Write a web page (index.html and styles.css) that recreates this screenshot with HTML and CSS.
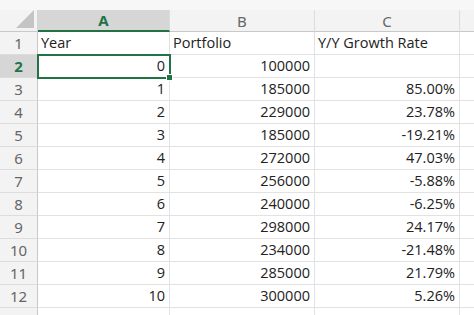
FILE: index.html
```html
<!DOCTYPE html>
<html lang="en">
<head>
    <meta charset="UTF-8">
    <title>Growth Rate Sheet</title>
    <link rel="stylesheet" href="styles.css">
</head>
<body>
    <div class="strip"></div>
    <div class="sheet">
        <div class="corner"><span class="tri"></span></div>
        <div class="colhead active">A</div>
        <div class="colhead">B</div>
        <div class="colhead">C</div>
        <div class="colhead last"></div>

        <div class="rowhead">1</div>
        <div class="cell">Year</div>
        <div class="cell">Portfolio</div>
        <div class="cell">Y/Y Growth Rate</div>
        <div class="cell"></div>

        <div class="rowhead active">2</div>
        <div class="cell num selected">0<span class="handle"></span></div>
        <div class="cell num">100000</div>
        <div class="cell num"></div>
        <div class="cell"></div>

        <div class="rowhead">3</div>
        <div class="cell num">1</div>
        <div class="cell num">185000</div>
        <div class="cell num">85.00%</div>
        <div class="cell"></div>

        <div class="rowhead">4</div>
        <div class="cell num">2</div>
        <div class="cell num">229000</div>
        <div class="cell num">23.78%</div>
        <div class="cell"></div>

        <div class="rowhead">5</div>
        <div class="cell num">3</div>
        <div class="cell num">185000</div>
        <div class="cell num">-19.21%</div>
        <div class="cell"></div>

        <div class="rowhead">6</div>
        <div class="cell num">4</div>
        <div class="cell num">272000</div>
        <div class="cell num">47.03%</div>
        <div class="cell"></div>

        <div class="rowhead">7</div>
        <div class="cell num">5</div>
        <div class="cell num">256000</div>
        <div class="cell num">-5.88%</div>
        <div class="cell"></div>

        <div class="rowhead">8</div>
        <div class="cell num">6</div>
        <div class="cell num">240000</div>
        <div class="cell num">-6.25%</div>
        <div class="cell"></div>

        <div class="rowhead">9</div>
        <div class="cell num">7</div>
        <div class="cell num">298000</div>
        <div class="cell num">24.17%</div>
        <div class="cell"></div>

        <div class="rowhead">10</div>
        <div class="cell num">8</div>
        <div class="cell num">234000</div>
        <div class="cell num">-21.48%</div>
        <div class="cell"></div>

        <div class="rowhead">11</div>
        <div class="cell num">9</div>
        <div class="cell num">285000</div>
        <div class="cell num">21.79%</div>
        <div class="cell"></div>

        <div class="rowhead">12</div>
        <div class="cell num">10</div>
        <div class="cell num">300000</div>
        <div class="cell num">5.26%</div>
        <div class="cell"></div>

        <div class="rowhead">13</div>
        <div class="cell"></div>
        <div class="cell"></div>
        <div class="cell"></div>
        <div class="cell"></div>
    </div>
</body>
</html>
```

FILE: styles.css
```css
body {
    margin: 0;
    background-color: #fff;
    font-family: 'Open Sans', sans-serif;
    color: #222;
    overflow: hidden;
}
.strip {
    height: 10px;
    background-color: #f7f7f7;
}
.sheet {
    display: grid;
    grid-template-columns: 38px 132px 145px 145px 20px;
    grid-template-rows: 22px repeat(13, 23px);
}
.corner {
    background-color: #f3f3f3;
    border-bottom: 1px solid #c8c8c8;
    border-right: 1px solid #d4d4d4;
    position: relative;
}
.tri {
    position: absolute;
    right: 3px;
    bottom: 3px;
    width: 0;
    height: 0;
    border-left: 18px solid transparent;
    border-bottom: 18px solid #c4c4c4;
}
.colhead {
    background-color: #f3f3f3;
    border-bottom: 1px solid #c8c8c8;
    border-right: 1px solid #dcdcdc;
    color: #666;
    font-family: 'Noto Sans', sans-serif;
    font-size: 15px;
    text-align: center;
    line-height: 22px;
}
.colhead.active {
    background-color: #d6d6d6;
    color: #217346;
    font-weight: bold;
    border-bottom: 2px solid #217346;
    line-height: 21px;
}
.colhead.last {
    border-right: none;
}
.rowhead {
    background-color: #f3f3f3;
    border-right: 1px solid #c8c8c8;
    border-bottom: 1px solid #dcdcdc;
    color: #666;
    font-family: 'Noto Sans', sans-serif;
    font-size: 15px;
    text-align: center;
    line-height: 22px;
}
.rowhead.active {
    background-color: #d6d6d6;
    color: #217346;
    font-weight: bold;
}
.cell {
    border-right: 1px solid #e2e2e2;
    border-bottom: 1px solid #e2e2e2;
    font-size: 14.5px;
    line-height: 22px;
    padding: 0 3px;
    white-space: nowrap;
}
.cell.num {
    text-align: right;
    padding-right: 4px;
}
.cell.selected {
    position: relative;
    outline: 2px solid #217346;
    outline-offset: -1px;
}
.handle {
    position: absolute;
    right: -4px;
    bottom: -4px;
    width: 5px;
    height: 5px;
    background-color: #217346;
    border: 1px solid #fff;
}
```
